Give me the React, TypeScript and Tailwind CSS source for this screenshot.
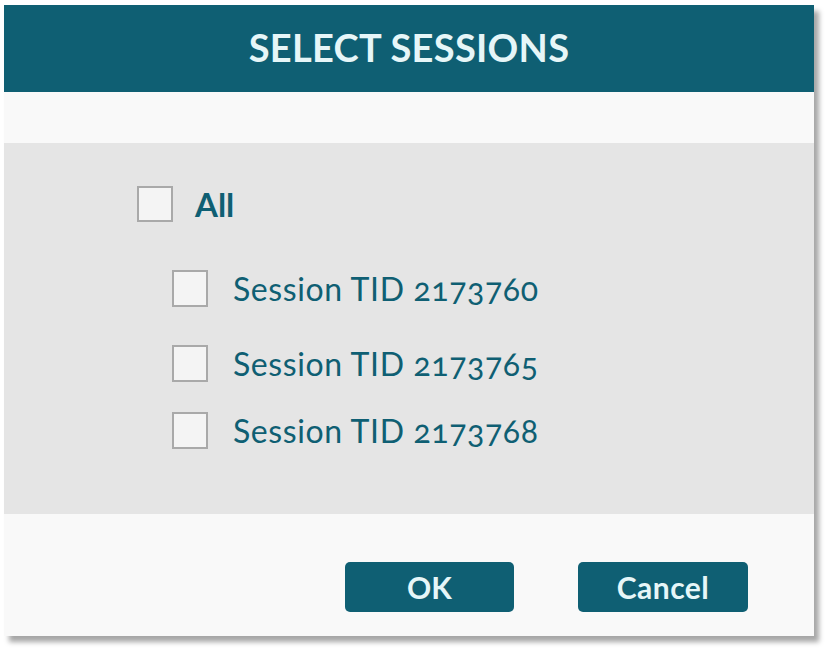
export default function App() {
  const sessions = [
    { id: "2173760", mt: "mt-[48px]" },
    { id: "2173765", mt: "mt-[38px]" },
    { id: "2173768", mt: "mt-[30px]" },
  ];

  return (
    <div className="min-h-[650px] bg-white pl-[4px] pt-[5px] font-['Lato','Open_Sans',sans-serif]">
      <div className="flex h-[631px] w-[810px] flex-col shadow-[5px_6px_5px_rgba(0,0,0,0.35)]">
        <div className="flex h-[87px] items-center justify-center bg-[#0f5f73] pb-[2px]">
          <h1 className="text-[38px] font-bold tracking-[0.3px] text-[#e6f6f8]">SELECT SESSIONS</h1>
        </div>

        <div className="h-[51px] bg-[#f9f9f9]"></div>

        <div className="h-[371px] bg-[#e5e5e5] pl-[133px] pt-[43px]">
          <label className="flex items-center gap-[22px]">
            <span className="h-[36px] w-[36px] border-2 border-[#a9a9a9] bg-[#f4f4f4]"></span>
            <span className="text-[33px] font-bold leading-none text-[#0f5f73]">All</span>
          </label>

          {sessions.map((s) => (
            <label key={s.id} className={`ml-[35px] flex items-center gap-[25px] ${s.mt}`}>
              <span className="h-[37px] w-[36px] border-2 border-[#a9a9a9] bg-[#f4f4f4]"></span>
              <span className="text-[32px] leading-none tracking-[0.6px] text-[#0f5f73] [font-variant-numeric:oldstyle-nums]">
                Session TID {s.id}
              </span>
            </label>
          ))}
        </div>

        <div className="flex h-[122px] justify-end gap-[64px] bg-[#f9f9f9] pr-[66px] pt-[48px]">
          <button className="h-[50px] w-[169px] rounded-[5px] bg-[#0f5f73] text-[30px] font-bold text-[#e6f6f8]">
            OK
          </button>
          <button className="h-[50px] w-[170px] rounded-[5px] bg-[#0f5f73] text-[30px] font-bold tracking-[0.5px] text-[#e6f6f8]">
            Cancel
          </button>
        </div>
      </div>
    </div>
  );
}
